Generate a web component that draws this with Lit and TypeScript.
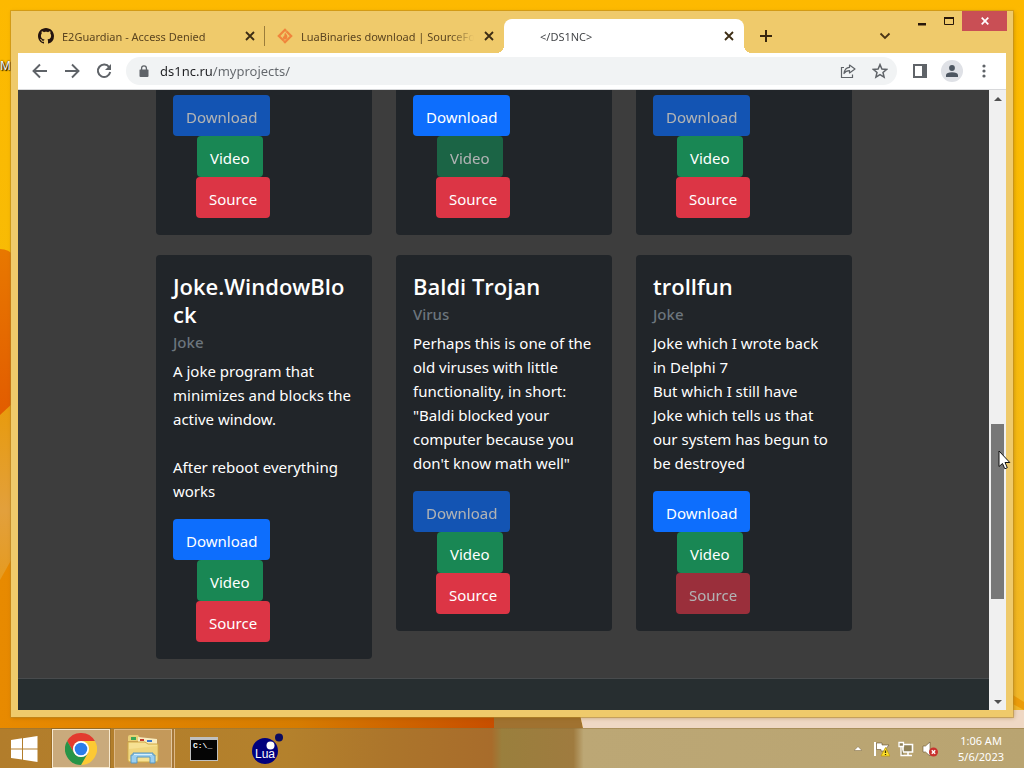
import { LitElement, html, css, svg, nothing } from "lit";
import { customElement, property } from "lit/decorators.js";

interface Project {
  title?: string;
  kind?: string;
  lines?: string[];
  off?: string;
}

const earlier: Project[] = [{ off: "Download" }, { off: "Video" }, { off: "Download" }];

const projects: Project[] = [
  {
    title: "Joke.WindowBlo\nck",
    kind: "Joke",
    lines: ["A joke program that", "minimizes and blocks the", "active window.", "", "After reboot everything", "works"],
  },
  {
    title: "Baldi Trojan",
    kind: "Virus",
    lines: ["Perhaps this is one of the", "old viruses with little", "functionality, in short:", "\"Baldi blocked your", "computer because you", "don't know math well\""],
    off: "Download",
  },
  {
    title: "trollfun",
    kind: "Joke",
    lines: ["Joke which I wrote back", "in Delphi 7", "But which I still have", "Joke which tells us that", "our system has begun to", "be destroyed"],
    off: "Source",
  },
];

@customElement("project-card")
class ProjectCard extends LitElement {
  @property({ attribute: false }) project: Project = {};

  static styles = css`
    :host {
      display: block;
      box-sizing: border-box;
      padding: 17px;
      background: #212529;
      border-radius: 4px;
      color: #fff;
      font: 15px/24px "Noto Sans", "Open Sans", sans-serif;
    }
    :host([cut]) {
      padding-top: 5px;
      border-radius: 0 0 4px 4px;
    }
    .title {
      margin: 0;
      font-size: 22px;
      line-height: 28px;
      font-weight: 600;
      font-family: "Open Sans", sans-serif;
      white-space: pre-line;
    }
    .kind {
      margin: 5px 0 7px;
      font-size: 15px;
      line-height: 19px;
      font-weight: 500;
      color: #6c757d;
    }
    .text {
      margin: 0 0 16px;
      white-space: pre;
    }
    .actions {
      display: flex;
      flex-direction: column;
      align-items: flex-start;
    }
    .btn {
      height: 41px;
      padding: 2px 12px 0;
      border: 1px solid transparent;
      border-radius: 4px;
      color: #fff;
      font: inherit;
      background-clip: border-box;
      background-origin: border-box;
    }
    .btn:disabled {
      opacity: 0.65;
    }
    .download {
      background-color: #0d6efd;
    }
    .video {
      margin-left: 24px;
      background-color: #198754;
    }
    .source {
      margin-left: 23px;
      background-color: #dc3545;
    }
  `;

  render() {
    const p = this.project;
    return html`
      ${p.title ? html`<h5 class="title">${p.title}</h5>` : nothing}
      ${p.kind ? html`<h6 class="kind">${p.kind}</h6>` : nothing}
      ${p.lines ? html`<p class="text">${p.lines.join("\n")}</p>` : nothing}
      <div class="actions">
        ${["Download", "Video", "Source"].map(
          (name) => html`<button class="btn ${name.toLowerCase()}" ?disabled=${p.off === name}>${name}</button>`
        )}
      </div>
    `;
  }
}

const closeIcon = svg`<svg width="10" height="10" viewBox="0 0 10 10"><path d="M1 1L9 9M9 1L1 9" stroke="currentColor" stroke-width="1.8" fill="none"/></svg>`;

const githubIcon = svg`<svg width="16" height="16" viewBox="0 0 16 16"><path fill="#24140f" d="M8 0C3.58 0 0 3.58 0 8c0 3.54 2.29 6.53 5.47 7.59.4.07.55-.17.55-.38 0-.19-.01-.82-.01-1.49-2.01.37-2.53-.49-2.69-.94-.09-.23-.48-.94-.82-1.13-.28-.15-.68-.52-.01-.53.63-.01 1.08.58 1.23.82.72 1.21 1.87.87 2.33.66.07-.52.28-.87.51-1.07-1.78-.2-3.64-.89-3.64-3.95 0-.87.31-1.59.82-2.15-.08-.2-.36-1.02.08-2.12 0 0 .67-.21 2.2.82.64-.18 1.32-.27 2-.27s1.36.09 2 .27c1.53-1.04 2.2-.82 2.2-.82.44 1.1.16 1.92.08 2.12.51.56.82 1.27.82 2.15 0 3.07-1.87 3.75-3.65 3.95.29.25.54.73.54 1.48 0 1.07-.01 1.93-.01 2.2 0 .21.15.46.55.38A8.01 8.01 0 0016 8c0-4.42-3.58-8-8-8z"/></svg>`;

const sourceforgeIcon = svg`<svg width="16" height="16" viewBox="0 0 16 16" fill="none" stroke="#f0853c" stroke-width="2.2"><path d="M6.8 12.8L1.8 8 8 1.8 9.2 3M9.4 3.2L14.2 8 8 14.2 6.8 13"/><path d="M8.2 4.4C9 6.2 10.8 7 10.4 9.2 10 11.2 8.6 11.6 7.8 11.6 6.4 11.4 5.6 10 6 8.4 6.6 8.8 7 8.6 7.2 8 7.2 6.8 7.6 5.6 8.2 4.4z" fill="#f0853c" stroke="none"/></svg>`;

@customElement("app-root")
class AppRoot extends LitElement {
  static styles = css`
    :host {
      display: flex;
      flex-direction: column;
      height: 100vh;
      position: relative;
      overflow: hidden;
      isolation: isolate;
      font-family: "Noto Sans", "Open Sans", sans-serif;
    }
    * {
      box-sizing: border-box;
    }
    button {
      border: 0;
      padding: 0;
      background: none;
      color: inherit;
      display: grid;
      place-items: center;
      flex: none;
    }
    svg {
      display: block;
    }
    .wallpaper {
      position: absolute;
      inset: 0;
      width: 100%;
      height: 100%;
      z-index: -2;
    }
    .shortcut {
      position: absolute;
      left: 0;
      top: 58px;
      z-index: -1;
      font-size: 12px;
      line-height: 16px;
      color: #fff;
      text-shadow: 1px 1px 1px #000, 0 0 2px #000;
    }
    .desktop {
      flex: 1;
      min-height: 0;
      display: flex;
      padding: 11px;
    }
    .window {
      flex: 1;
      min-width: 0;
      display: flex;
      flex-direction: column;
      padding: 0 7px 7px;
      background: #efca6b;
      box-shadow: 0 0 0 1px #b98a2a88, 1px 1px 4px #7a520066;
    }
    .strip {
      flex: none;
      height: 42px;
      display: flex;
      padding-left: 8px;
    }
    .tab {
      display: flex;
      align-items: center;
      width: 239px;
      height: 34px;
      margin-top: 8px;
      padding: 0 7px 0 12px;
      color: #5b4520;
      font-size: 11px;
    }
    .tab.active {
      width: 240px;
      background: #fff;
      color: #45474a;
      border-radius: 8px 8px 0 0;
      position: relative;
    }
    .tab.active::before,
    .tab.active::after {
      content: "";
      position: absolute;
      bottom: 0;
      width: 8px;
      height: 8px;
    }
    .tab.active::before {
      left: -8px;
      background: radial-gradient(circle at 0 0, transparent 8px, #fff 8px);
    }
    .tab.active::after {
      right: -8px;
      background: radial-gradient(circle at 100% 0, transparent 8px, #fff 8px);
    }
    .tab.ruled {
      background: linear-gradient(#9a7c3a, #9a7c3a) right center / 1px 20px no-repeat;
    }
    .favicon {
      width: 16px;
      height: 16px;
      margin-right: 8px;
      flex: none;
    }
    .label {
      flex: 1;
      min-width: 0;
      white-space: nowrap;
      mask-image: linear-gradient(to left, transparent 0, #000 24px);
    }
    .close {
      width: 16px;
      height: 16px;
      margin-left: 7px;
      color: #3c2c14;
    }
    .newtab {
      width: 28px;
      height: 28px;
      margin: 11px 0 0 8px;
    }
    .search {
      width: 28px;
      height: 28px;
      margin: 11px 2px 0 auto;
      padding-right: 14px;
    }
    .strip .min,
    .strip .max {
      width: 27px;
      height: 20px;
    }
    .strip .quit {
      width: 45px;
      height: 20px;
      margin-right: -1px;
      background: #c94f55;
      color: #fff;
    }
    .toolbar {
      flex: none;
      height: 37px;
      display: flex;
      align-items: center;
      padding: 0 6px;
      background: #fff;
      color: #5f6368;
      border-bottom: 1px solid #d8d9db;
    }
    .nav {
      width: 32px;
      height: 32px;
    }
    .address {
      flex: 1;
      height: 28px;
      display: flex;
      align-items: center;
      margin: 0 7px 0 6px;
      padding: 0 1px 0 13px;
      border-radius: 14px;
      background: #f1f3f4;
    }
    .url {
      flex: 1;
      min-width: 0;
      border: 0;
      outline: 0;
      margin-left: 11px;
      padding: 0;
      font: 13px/20px "Noto Sans", "Open Sans", sans-serif;
      color: transparent;
      background: linear-gradient(to right, #202124 53px, #62666b 53px);
      background-clip: text;
      -webkit-background-clip: text;
    }
    .avatar {
      width: 22px;
      height: 22px;
      margin: 0 5px;
      border-radius: 50%;
      background: #dfe1e6;
    }
    .view {
      flex: 1;
      min-height: 0;
      display: flex;
      background: #3d3d3d;
    }
    .page {
      flex: 1;
      min-width: 0;
      overflow: hidden;
      display: flex;
      flex-direction: column;
    }
    .cards {
      width: 100%;
      max-width: 697px;
      margin: 0 auto 19px;
      padding-left: 1px;
      display: grid;
      grid-template-columns: repeat(3, 1fr);
      gap: 20px 24px;
      align-items: start;
    }
    .footer {
      flex: 1;
      background: #272e30;
      border-top: 1px solid #484b4d;
    }
    .scroll {
      width: 17px;
      flex: none;
      display: flex;
      flex-direction: column;
      background: #f0f0f0;
    }
    .arrow {
      width: 17px;
      height: 17px;
    }
    .before {
      flex: 317;
    }
    .thumb {
      flex: 175;
      margin: 0 2px;
      background: #787878;
    }
    .after {
      flex: 94;
    }
    .taskbar {
      flex: none;
      height: 40px;
      display: flex;
      align-items: center;
      border-top: 1px solid #8f6f3566;
      background: linear-gradient(to right, #b27d2b 0, #b4812c 28%, #ac752b 38%, #a86c2b 48%, #9a7f3d 49%, #9f7b3f 56%, #bca775 57%, #b9a471 100%);
    }
    .task {
      height: 39px;
      width: 58px;
    }
    .start {
      width: 48px;
      margin-right: 4px;
    }
    .current {
      border: 1px solid #f7e9cf;
      background: #c9aa7c;
      box-shadow: 0 0 0 1px #7c592466;
    }
    .stacked {
      margin: 0 3px 0 4px;
      border: 1px solid #dcb887;
      border-right-color: #e3c8a0;
      background: #c4995a;
      box-shadow: 2px 0 0 #a67737, 3px 0 0 #dcb887;
    }
    .lua {
      margin-left: 6px;
    }
    .tray {
      margin-left: auto;
      display: flex;
      align-items: center;
    }
    .tray button {
      width: 24px;
      height: 24px;
    }
    .clock {
      margin: 0 20px 0 16px;
      color: #fff;
      font-size: 11px;
      line-height: 16px;
      text-align: center;
    }
    .pointer {
      position: absolute;
      left: 97.5%;
      top: 450px;
      z-index: 5;
      pointer-events: none;
    }
  `;

  renderWallpaper() {
    return html`<svg class="wallpaper" viewBox="0 0 1024 768" preserveAspectRatio="none" aria-hidden="true">
      <defs>
        <linearGradient id="sky" x1="0" y1="0" x2="0" y2="1"><stop offset="0" stop-color="#fdb900"/><stop offset=".35" stop-color="#f8bb05"/><stop offset="1" stop-color="#efb52e"/></linearGradient>
        <linearGradient id="leaf" x1="0" y1="0" x2="0" y2="1"><stop offset="0" stop-color="#e87800"/><stop offset="1" stop-color="#e25c00"/></linearGradient>
        <linearGradient id="low" x1="0" y1="0" x2="1" y2="0"><stop offset="0" stop-color="#e88a00"/><stop offset=".6" stop-color="#d67c00"/><stop offset="1" stop-color="#c74e00"/></linearGradient>
        <linearGradient id="side" x1="0" y1="0" x2="0" y2="1"><stop offset="0" stop-color="#e99a06"/><stop offset=".6" stop-color="#e2a03c"/><stop offset="1" stop-color="#e69a1c"/></linearGradient>
      </defs>
      <rect width="1024" height="768" fill="url(#sky)"/>
      <path d="M0 400L14 392V590H0z" fill="url(#side)"/>
      <path d="M0 249Q9 249 14 256V402L0 415z" fill="url(#leaf)"/>
      <path d="M0 580L14 555V717H494V768H0z" fill="url(#low)"/>
      <path d="M494 710H579L592 768H494z" fill="#a07230"/>
      <path d="M579 710H1024V768H592z" fill="#efd8c4"/>
      <path d="M1005 690L1024 702V710L1005 700z" fill="#eb9c0b"/>
    </svg>`;
  }

  renderTab(icon: unknown, label: string, cls: string) {
    return html`<div class="tab ${cls}">
      <span class="favicon">${icon}</span><span class="label">${label}</span>
      <button class="close" aria-label="Close tab">${closeIcon}</button>
    </div>`;
  }

  render() {
    return html`
      ${this.renderWallpaper()}
      <span class="shortcut">M</span>
      <div class="desktop">
        <section class="window">
          <header class="strip">
            ${this.renderTab(githubIcon, "E2Guardian - Access Denied", "ruled")}
            ${this.renderTab(sourceforgeIcon, "LuaBinaries download | SourceFo", "")}
            ${this.renderTab(nothing, "</DS1NC>", "active")}
            <button class="newtab" aria-label="New tab"><svg width="12" height="12" viewBox="0 0 12 12"><path d="M6 0V12M0 6H12" stroke="#38260e" stroke-width="2"/></svg></button>
            <button class="search" aria-label="Search tabs"><svg width="12" height="8" viewBox="0 0 12 8"><path d="M1.5 1.5L6 6L10.500 1.500" fill="none" stroke="#4a3414" stroke-width="1.8"/></svg></button>
            <button class="min" aria-label="Minimize"><svg width="8" height="12" viewBox="0 0 8 12"><path d="M0 8H8V10.500H0z" fill="#28170a"/></svg></button>
            <button class="max" aria-label="Maximize"><svg width="10" height="8" viewBox="0 0 10 8"><path d="M.5 1H9.500V7.500H.5z" fill="none" stroke="#28170a"/><path d="M0 0H10V2H0z" fill="#28170a"/></svg></button>
            <button class="quit" aria-label="Close"><svg width="8" height="8" viewBox="0 0 8 8"><path d="M.7 .7L7.300 7.300M7.300 .7L.7 7.300" stroke="#fff" stroke-width="1.700"/></svg></button>
          </header>
          <nav class="toolbar">
            <button class="nav" aria-label="Back"><svg width="16" height="16" viewBox="0 0 16 16"><path d="M15 8H2M8 1.500L1.500 8L8 14.500" fill="none" stroke="currentColor" stroke-width="1.900"/></svg></button>
            <button class="nav" aria-label="Forward"><svg width="16" height="16" viewBox="0 0 16 16"><path d="M1 8H14M8 1.500L14.500 8L8 14.500" fill="none" stroke="currentColor" stroke-width="1.900"/></svg></button>
            <button class="nav" aria-label="Reload"><svg width="16" height="16" viewBox="0 0 16 16"><path d="M13.200 4.200A6.200 6.200 0 1 0 14.200 9" fill="none" stroke="currentColor" stroke-width="2"/><path d="M15 1V7H9z" fill="currentColor"/></svg></button>
            <div class="address">
              <svg width="10" height="12" viewBox="0 0 10 12"><path d="M1 4.500H9Q9.500 4.500 9.500 5V11Q9.500 12 8.500 12H1.500Q.5 12 .5 11V5Q.5 4.500 1 4.500z" fill="currentColor"/><path d="M2.600 5V3.200A2.400 2.400 0 0 1 7.400 3.200V5" fill="none" stroke="currentColor" stroke-width="1.300"/></svg>
              <input class="url" type="text" aria-label="Address" value="ds1nc.ru/myprojects/" spellcheck="false">
              <button class="nav" aria-label="Share"><svg width="16" height="16" viewBox="0 0 16 16" fill="none" stroke="currentColor" stroke-width="1.200"><path d="M4 4.500H1.500V14.500H12.500V11.500"/><path d="M9.500 2L15 6L9.500 10V7.600Q6 7.500 4 10.500Q4.800 4.700 9.500 4.400z" stroke-linejoin="round"/></svg></button>
              <button class="nav" aria-label="Bookmark"><svg width="16" height="16" viewBox="0 0 16 16"><path d="M8 1.600L9.900 6L14.600 6.400L11 9.500L12.100 14.100L8 11.700L3.900 14.100L5 9.500L1.400 6.400L6.100 6z" fill="none" stroke="currentColor" stroke-width="1.500"/></svg></button>
            </div>
            <button class="nav" aria-label="Side panel"><svg width="14" height="14" viewBox="0 0 14 14"><path d="M1 1H13V13H1z" fill="none" stroke="currentColor" stroke-width="2"/><path d="M9 0H14V14H9z" fill="currentColor"/></svg></button>
            <button class="avatar" aria-label="Profile"><svg width="12" height="12" viewBox="0 0 12 12"><circle cx="6" cy="3" r="2.900" fill="#4d5661"/><path d="M0 12V10Q.5 7.200 6 7.200T12 10V12z" fill="#4d5661"/></svg></button>
            <button class="nav" aria-label="Menu"><svg width="4" height="14" viewBox="0 0 4 14" fill="currentColor"><circle cx="2" cy="2" r="1.600"/><circle cx="2" cy="7" r="1.600"/><circle cx="2" cy="12" r="1.600"/></svg></button>
          </nav>
          <div class="view">
            <main class="page">
              <div class="cards">
                ${earlier.map((p) => html`<project-card cut .project=${p}></project-card>`)}
                ${projects.map((p) => html`<project-card .project=${p}></project-card>`)}
              </div>
              <footer class="footer"></footer>
            </main>
            <div class="scroll">
              <button class="arrow" aria-label="Scroll up"><svg width="8" height="4" viewBox="0 0 8 4"><path d="M0 4L4 0L8 4z" fill="#505050"/></svg></button>
              <div class="before"></div>
              <div class="thumb"></div>
              <div class="after"></div>
              <button class="arrow" aria-label="Scroll down"><svg width="8" height="4" viewBox="0 0 8 4"><path d="M0 0L4 4L8 0z" fill="#505050"/></svg></button>
            </div>
          </div>
        </section>
      </div>
      <footer class="taskbar">
        <button class="task start" aria-label="Start"><svg width="28" height="26" viewBox="0 0 28 26" fill="#fff"><path d="M1 4L12 2.300V12.400H1zM13 2.200L27.500 0V12.400H13zM1 13.400H12V23.600L1 22zM13 13.400H27.500V26L13 23.800z"/></svg></button>
        <button class="task current" aria-label="Chrome"><svg width="32" height="32" viewBox="0 0 32 32"><path d="M16 8H29.860A16 16 0 0 1 16 32L22.900 20z" fill="#fcc934"/><path d="M2.140 8L9.100 20A8 8 0 0 1 16 8H29.860A16 16 0 0 0 2.140 8z" fill="#e33b2e"/><path d="M2.140 8L9.100 20A8 8 0 0 0 22.900 20L16 32A16 16 0 0 1 2.140 8z" fill="#279447"/><circle cx="16" cy="16" r="8" fill="#fff"/><circle cx="16" cy="16" r="6.300" fill="#2b7de9"/></svg></button>
        <button class="task stacked" aria-label="File Explorer"><svg width="32" height="30" viewBox="0 0 32 30"><path d="M1 3Q1 1 3 1H11L13 4H20V7H1z" fill="#e9cf76"/><path d="M4 3H9V6H4z" fill="#3aa655"/><path d="M11 3L30 5V12H11z" fill="#f8ecc0"/><path d="M13 5H17V7H13z" fill="#c33a2c"/><path d="M20 6H25V8H20z" fill="#3b78c8"/><path d="M1 8H18L21 10H31V26Q31 28 29 28H3Q1 28 1 26z" fill="#f6e193" stroke="#d0a945"/><path d="M2 15L30 12V22L2 25z" fill="#edce70" opacity=".6"/><path d="M6 19H26V21H28V29H23V23H10V29H4V21H6z" fill="#9bcff0" stroke="#5797c2"/><path d="M7 20H25V21H7z" fill="#d7f0fc"/></svg></button>
        <button class="task" aria-label="Command Prompt"><svg width="28" height="24" viewBox="0 0 28 24"><path d="M0 0H28V24H0z" fill="#bfc0c0"/><path d="M1 3H27V23H1z" fill="#050505"/><text x="3" y="11" font-family="Liberation Mono, monospace" font-size="8" font-weight="700" fill="#fff">C:\\_</text></svg></button>
        <button class="task lua" aria-label="Lua"><svg width="32" height="32" viewBox="0 0 32 32"><circle cx="13" cy="18" r="13" fill="#00007d"/><circle cx="18.500" cy="12.500" r="4" fill="#fff"/><circle cx="27" cy="4.500" r="4" fill="#0b0b60"/><text x="3" y="25" font-family="Liberation Sans, Arial, sans-serif" font-size="12" fill="#fff">Lua</text></svg></button>
        <div class="tray">
          <button aria-label="Show hidden icons"><svg width="8" height="5" viewBox="0 0 8 5"><path d="M0 4.500L4 .5L8 4.500z" fill="#fff" stroke="#77633b" stroke-width=".5"/></svg></button>
          <button aria-label="Action Center"><svg width="16" height="16" viewBox="0 0 16 16"><path d="M1 1V15" stroke="#fff" stroke-width="2"/><path d="M2.500 2H8V4H15L12 7.500L13 10H7V8.500H2.500z" fill="#fff" stroke="#665230" stroke-width=".6"/><path d="M11.500 6.500L16 15H7z" fill="#ffe12b" stroke="#b99500" stroke-width=".7"/><path d="M11.500 9.500V12M11.500 13V14" stroke="#3a3000" stroke-width="1.300"/></svg></button>
          <button aria-label="Network"><svg width="16" height="16" viewBox="0 0 16 16"><path d="M5 3.500H14.500V11H5z" fill="#8f8158" stroke="#fff" stroke-width="1.600"/><path d="M10 11V14M6 14.500H14" stroke="#fff" stroke-width="1.600"/><path d="M1 1.500H5.500V5.500H1zM3 5.500V14.500H6" fill="#8f8158" stroke="#fff" stroke-width="1.300"/></svg></button>
          <button aria-label="Volume"><svg width="16" height="16" viewBox="0 0 16 16"><path d="M1 5H3.500L8 1V15L3.500 11H1z" fill="#fff" stroke="#665230" stroke-width=".6"/><circle cx="11.500" cy="11" r="4.500" fill="#c8322e"/><path d="M9.800 9.300L13.200 12.700M13.200 9.300L9.800 12.700" stroke="#fff" stroke-width="1.400"/></svg></button>
          <div class="clock">1:06 AM<br>5/6/2023</div>
        </div>
      </footer>
      <svg class="pointer" width="13" height="20" viewBox="0 0 13 20" aria-hidden="true"><path d="M1 1V16.500L4.500 13.500L6.800 18.800L9.300 17.700L7 12.500H11.800z" fill="#fff" stroke="#111"/></svg>
    `;
  }
}
